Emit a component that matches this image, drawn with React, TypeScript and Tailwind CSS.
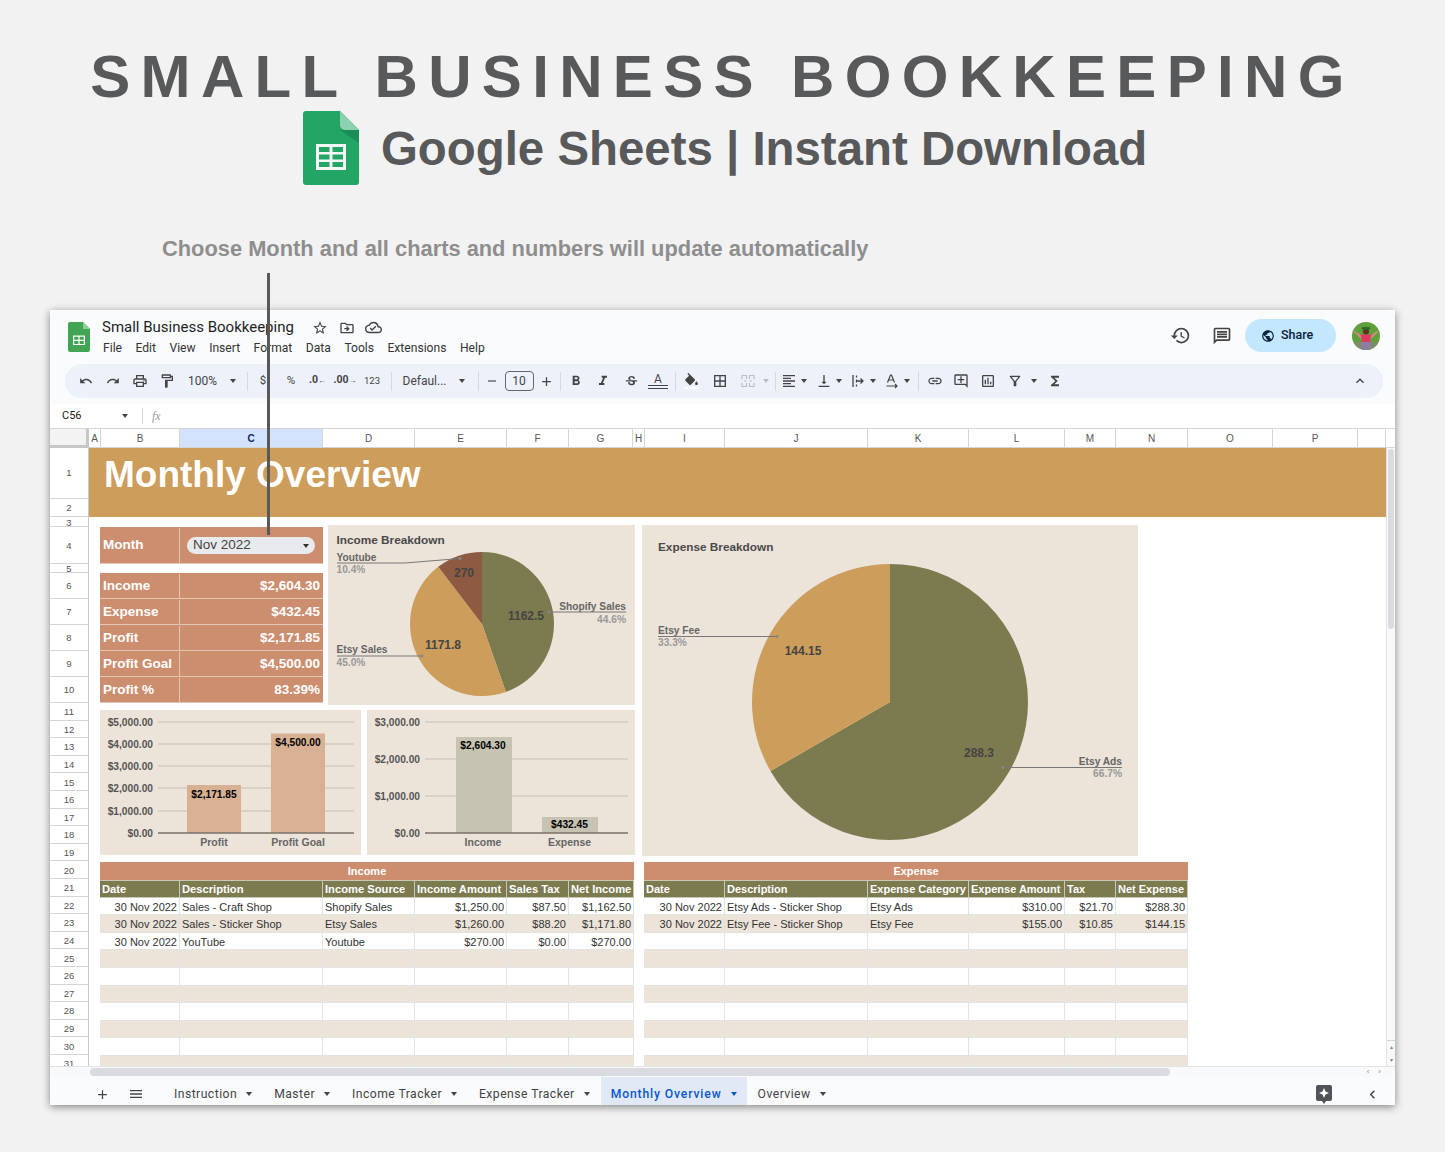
import React from "react";
import {
  MdUndo, MdRedo, MdOutlinePrint, MdOutlineFormatPaint, MdRemove, MdAdd, MdFormatBold, MdFormatItalic,
  MdStrikethroughS, MdOutlineBorderAll, MdFormatAlignLeft, MdVerticalAlignBottom,
  MdLink, MdOutlineAddComment, MdOutlineInsertChart, MdOutlineFilterAlt, MdFunctions, MdKeyboardArrowUp,
  MdStarBorder, MdOutlineDriveFileMove, MdOutlineCloudDone, MdHistory, MdOutlineComment, MdPublic, MdMenu, MdChevronLeft,
} from "react-icons/md";

const Caret = ({ className = "border-t-[#444]" }: { className?: string }) => (
  <span className={`inline-block w-0 h-0 border-l-[3.5px] border-r-[3.5px] border-t-[4px] border-l-transparent border-r-transparent ${className}`} />
);

const Slot = ({ w, children }: { w: number; children?: React.ReactNode }) => (
  <div className="flex items-center justify-center h-full shrink-0 text-[#444]" style={{ width: w }}>{children}</div>
);
const Sep = () => <div className="w-px h-[19px] bg-[#d5d9e0]" />;

const SmallLogo = () => (
  <svg width="22" height="30" viewBox="0 0 22 30">
    <path d="M2 0h13l7 7v21a2 2 0 0 1-2 2H2a2 2 0 0 1-2-2V2a2 2 0 0 1 2-2z" fill="#43a554" />
    <path d="M15 0l7 7h-7z" fill="#8ccf95" />
    <path d="M5 13.500h12v9.500H5z" fill="#fff" />
    <path d="M6.200 14.700h4.200v3h-4.200zM11.600 14.700h4.200v3h-4.200zM6.200 18.900h4.200v3h-4.200zM11.600 18.900h4.200v3h-4.200z" fill="#43a554" />
  </svg>
);

const BigLogo = () => (
  <svg width="56" height="74" viewBox="0 0 56 74">
    <path d="M3 0h34l19 19v52a3 3 0 0 1-3 3H3a3 3 0 0 1-3-3V3a3 3 0 0 1 3-3z" fill="#23a566" />
    <path d="M37 19l19 13V19z" fill="#1b8d57" />
    <path d="M37 0l19 19H42a5 5 0 0 1-5-5z" fill="#8ed1b1" />
    <path d="M13 33h30v26H13z" fill="#f4f7f5" />
    <path d="M16 36h10.500v5H16zM29.500 36H40v5H29.500zM16 43.500h10.500v5H16zM29.500 43.500H40v5H29.500zM16 51h10.500v5H16zM29.500 51H40v5H29.500z" fill="#23a566" />
  </svg>
);

const Avatar = () => (
  <svg width="28" height="28" viewBox="0 0 28 28">
    <clipPath id="av"><circle cx="14" cy="14" r="14" /></clipPath>
    <g clipPath="url(#av)">
      <rect width="28" height="28" fill="#5fa03c" />
      <rect y="20" width="28" height="8" fill="#7f8a6a" />
      <path d="M1.500 9.500l.8-1L9 13h10l6.700-4.500.8 1L20 16h-1v2H9v-2H8z" fill="#c98f76" />
      <path d="M8.500 12.500h11l-1 4v4h-9v-4z" fill="#dd3a62" />
      <rect x="9" y="20" width="10" height="8" fill="#8b7fa0" />
      <circle cx="14" cy="9.500" r="3" fill="#5b3423" />
      <ellipse cx="14" cy="6.300" rx="4.500" ry="1.500" fill="#2f6a2a" />
    </g>
  </svg>
);

const FillIcon = () => (
  <svg width="17" height="17" viewBox="0 0 24 24">
    <path fill="#444" d="M16.560 8.940L7.620 0 6.210 1.410l2.380 2.380-5.150 5.150c-.59.59-.59 1.540 0 2.120l5.500 5.500c.29.29.68.44 1.060.44s.77-.15 1.060-.44l5.500-5.500c.59-.58.59-1.530 0-2.120zM19 11.500s-2 2.170-2 3.500c0 1.100.9 2 2 2s2-.9 2-2c0-1.330-2-3.500-2-3.500z" />
    <path fill="#fff" d="M1 20h22v3H1z" />
  </svg>
);
const WrapIcon = () => (
  <svg width="14" height="14" viewBox="0 0 14 14" fill="none" stroke="#444" strokeWidth="1.300">
    <path d="M2 1v12M5.500 1.500v2M5.500 5.500v3M5.500 10.500v2M6 7h6M9.500 4.500L12 7 9.500 9.500" />
  </svg>
);
const RotateIcon = () => (
  <svg width="16" height="16" viewBox="0 0 16 16" fill="none" stroke="#444" strokeWidth="1.200">
    <path d="M3.500 9.500L6.500 2h1l3 7.500M4.500 7h5M2.500 13h10M11 11l2 2-2 2" />
  </svg>
);
const MergeIcon = () => (
  <svg width="14" height="14" viewBox="0 0 14 14" fill="none" stroke="#bdbfc3" strokeWidth="1.200">
    <path d="M1 5V1.500h4.500V5M8.500 5V1.500H13V5M1 9v3.500h4.500V9M8.500 9v3.500H13V9M3 7h2.500M8.500 7H11" />
  </svg>
);
const ExploreIcon = () => (
  <svg width="16" height="19" viewBox="0 0 16 19">
    <path d="M2 0h12a2 2 0 0 1 2 2v12a2 2 0 0 1-2 2h-4l-2 3-2-3H2a2 2 0 0 1-2-2V2a2 2 0 0 1 2-2z" fill="#505458" />
    <path d="M8 3l1.500 3.500L13 8l-3.500 1.500L8 13l-1.500-3.500L3 8l3.500-1.500z" fill="#fff" />
  </svg>
);

const menus = ["File", "Edit", "View", "Insert", "Format", "Data", "Tools", "Extensions", "Help"];

const TopBar = () => (
  <div className="bg-[#f9fbfd] h-[94px] shrink-0 flex flex-col font-['Roboto',sans-serif]">
    <div className="flex h-[54px] shrink-0">
      <div className="ml-[18px] mt-[12px]"><SmallLogo /></div>
      <div className="ml-[12px] flex flex-col mt-[7px]">
        <div className="flex items-center h-[19px]">
          <span className="text-[15px] pt-px text-[#1f1f1f] w-[210px] whitespace-nowrap">Small Business Bookkeeping</span>
          <MdStarBorder size={16} className="text-[#444] mt-[2px]" />
          <MdOutlineDriveFileMove size={16} className="text-[#444] ml-[11px] mt-[2px]" />
          <MdOutlineCloudDone size={17} className="text-[#444] ml-[10px] mt-[2px]" />
        </div>
        <div className="flex gap-[13.500px] mt-[3px] ml-px text-[12.100px] text-[#333] leading-[18px]">
          {menus.map((m) => <span key={m}>{m}</span>)}
        </div>
      </div>
      <div className="ml-auto flex items-center mr-[15px] mt-[-3px]">
        <MdHistory size={21} className="text-[#444]" />
        <MdOutlineComment size={20} className="text-[#444] ml-[21px] -scale-x-100" />
        <div className="ml-[13px] w-[91px] h-[33px] rounded-full bg-[#c2e7ff] flex items-center pl-[16px] text-[#0b2239]">
          <MdPublic size={14} />
          <span className="ml-[6px] text-[12.500px] font-medium">Share</span>
        </div>
        <div className="ml-[16px] h-[28px]"><Avatar /></div>
      </div>
    </div>
    <div className="ml-[15px] mr-[12px] h-[34px] rounded-full bg-[#edf2fa] flex items-center pl-[7px] pr-[15px] text-[#444]">
      <Slot w={27}><MdUndo size={14} /></Slot>
      <Slot w={27}><MdRedo size={14} /></Slot>
      <Slot w={27}><MdOutlinePrint size={16} /></Slot>
      <Slot w={27}><MdOutlineFormatPaint size={16} /></Slot>
      <Slot w={45}><span className="text-[12px]">100%</span></Slot>
      <Slot w={16}><Caret /></Slot>
      <Slot w={12}><Sep /></Slot>
      <Slot w={20}><span className="text-[11.500px]">$</span></Slot>
      <Slot w={5} />
      <Slot w={26}><span className="text-[11.500px]">%</span></Slot>
      <Slot w={27}><span className="text-[10.500px] font-bold relative -top-px">.0<span className="text-[8px]">←</span></span></Slot>
      <Slot w={28}><span className="text-[10.500px] font-bold relative -top-px">.00<span className="text-[8px]">→</span></span></Slot>
      <Slot w={26}><span className="text-[9.500px]">123</span></Slot>
      <Slot w={12}><Sep /></Slot>
      <Slot w={55}><span className="text-[12px]">Defaul...</span></Slot>
      <Slot w={20}><Caret /></Slot>
      <Slot w={12}><Sep /></Slot>
      <Slot w={16}><MdRemove size={14} /></Slot>
      <Slot w={38}><div className="w-[29px] h-[20px] border border-[#666] rounded-[4px] flex items-center justify-center text-[12px]">10</div></Slot>
      <Slot w={16}><MdAdd size={15} /></Slot>
      <Slot w={12}><Sep /></Slot>
      <Slot w={20}><MdFormatBold size={16} /></Slot>
      <Slot w={34}><MdFormatItalic size={16} /></Slot>
      <Slot w={22}><MdStrikethroughS size={15} /></Slot>
      <Slot w={32}>
        <div className="flex flex-col items-center">
          <span className="text-[12px] leading-[12px]">A</span>
          <div className="w-[20px] h-[4px] border-y border-[#444]" />
        </div>
      </Slot>
      <Slot w={2}><Sep /></Slot>
      <Slot w={30}><FillIcon /></Slot>
      <Slot w={28}><MdOutlineBorderAll size={16} /></Slot>
      <Slot w={28}><MergeIcon /></Slot>
      <Slot w={8}><Caret className="border-t-[#bdbfc3]" /></Slot>
      <Slot w={10}><Sep /></Slot>
      <Slot w={18}><MdFormatAlignLeft size={16} /></Slot>
      <Slot w={12}><Caret /></Slot>
      <Slot w={4} />
      <Slot w={20}><MdVerticalAlignBottom size={16} /></Slot>
      <Slot w={10}><Caret /></Slot>
      <Slot w={4} />
      <Slot w={20}><WrapIcon /></Slot>
      <Slot w={10}><Caret /></Slot>
      <Slot w={4} />
      <Slot w={20}><RotateIcon /></Slot>
      <Slot w={10}><Caret /></Slot>
      <Slot w={12}><Sep /></Slot>
      <Slot w={22}><MdLink size={16} /></Slot>
      <Slot w={30}><MdOutlineAddComment size={16} /></Slot>
      <Slot w={24}><MdOutlineInsertChart size={16} /></Slot>
      <Slot w={30}><MdOutlineFilterAlt size={16} /></Slot>
      <Slot w={8}><Caret /></Slot>
      <Slot w={34}><MdFunctions size={16} /></Slot>
      <div className="ml-auto"><MdKeyboardArrowUp size={16} /></div>
    </div>
  </div>
);

const FormulaBar = () => (
  <div className="h-[25px] shrink-0 bg-white flex items-center font-['Roboto',sans-serif] text-[#444] border-b border-[#d5d5d5]">
    <span className="w-[72px] pl-[12px] text-[11px] text-[#222]">C56</span>
    <Caret />
    <div className="ml-[14px] w-px h-[14px] bg-[#d5d5d5]" />
    <span className="ml-[9px] text-[12px] italic text-[#999] font-['Liberation_Serif',serif]">fx</span>
  </div>
);

const columns: [string, number][] = [
  ["A", 12], ["B", 79], ["C", 143], ["D", 92], ["E", 92], ["F", 62], ["G", 64], ["H", 12], ["I", 80], ["J", 143],
  ["K", 101], ["L", 96], ["M", 51], ["N", 72], ["O", 85], ["P", 85], ["", 28],
];

const ColumnHeader = () => (
  <div className="h-[19px] shrink-0 flex bg-white border-b border-[#d5d5d5] text-[10px] text-[#555] font-['Liberation_Sans',sans-serif]">
    <div className="w-[39px] shrink-0 bg-[#f3f3f3] border-r-[3px] border-b-[3px] border-[#c7c7c7] h-[19px]" />
    {columns.map(([c, w]) => (
      <div
        key={c || "end"}
        style={{ width: w }}
        className={c === "C"
          ? "shrink-0 flex items-center justify-center border-r border-[#d5d5d5] bg-[#d3e3fd] text-[#0b2a5e] font-bold"
          : "shrink-0 flex items-center justify-center border-r border-[#d5d5d5]"}
      >
        {c}
      </div>
    ))}
  </div>
);

const rowHeights: number[] = [51, 18, 10, 37, 9, 26, 26, 26, 26, 26, ...Array(21).fill(17.6)];

const rowPad = (i: number) => {
  if (i < 2) return "flex items-center justify-center border-b border-[#d5d5d5]";
  if (i === 2) return "flex items-center justify-center border-b border-[#d5d5d5] pt-[3px]";
  if (i >= 5 && i <= 9) return "flex items-center justify-center border-b border-[#d5d5d5] pt-px";
  return "flex items-center justify-center border-b border-[#d5d5d5] pt-[2px]";
};

const RowHeader = () => (
  <div className="w-[39px] shrink-0 bg-white border-r border-[#c7c7c7] text-[9.500px] leading-[10px] text-[#555]">
    {rowHeights.map((h, i) => (
      <div key={i} style={{ height: h }} className={rowPad(i)}>
        {i + 1}
      </div>
    ))}
  </div>
);

const SumRow = ({ label, value, h = "h-[26px]" }: { label: string; value?: React.ReactNode; h?: string }) => (
  <div className={`${h} flex bg-[#cc8e6f] border-b border-[#e4c6b5] text-white font-bold text-[13.500px] pt-px`}>
    <div className="w-[80px] shrink-0 pl-[3px] flex items-center border-r border-[#e4c6b5]">{label}</div>
    <div className="flex-1 pr-[3px] flex items-center justify-end">{value}</div>
  </div>
);

const Summary = () => (
  <div className="w-[223px] shrink-0 pt-[2px]">
    <SumRow
      label="Month"
      h="h-[37px]"
      value={
        <div className="w-[128px] h-[17px] mr-[5px] rounded-full bg-[#e8eaed] flex items-center justify-between pl-[6px] pr-[6px] text-[#444] font-normal text-[13.500px]">
          <span>Nov 2022</span>
          <Caret className="border-t-[#333]" />
        </div>
      }
    />
    <div className="h-[9px]" />
    <SumRow label="Income" value="$2,604.30" />
    <SumRow label="Expense" value="$432.45" />
    <SumRow label="Profit" value="$2,171.85" />
    <SumRow label="Profit Goal" value="$4,500.00" />
    <SumRow label="Profit %" value="83.39%" />
  </div>
);

const slice = (cx: number, cy: number, r: number, from: number, to: number) => {
  const p = (a: number) => {
    const t = (a * Math.PI) / 180;
    return `${(cx + r * Math.sin(t)).toFixed(2)} ${(cy - r * Math.cos(t)).toFixed(2)}`;
  };
  return `M${cx} ${cy}L${p(from)}A${r} ${r} 0 ${to - from > 180 ? 1 : 0} 1 ${p(to)}Z`;
};

const Label = ({ x, y, anchor = "start", children, fill = "#666", size = 10.5 }: { x: number; y: number; anchor?: "start" | "middle" | "end"; children: React.ReactNode; fill?: string; size?: number }) => (
  <text x={x} y={y} textAnchor={anchor} fill={fill} fontSize={size} fontWeight="700">{children}</text>
);

const IncomePie = () => (
  <div className="w-[307px] h-[180px] ml-[5px] bg-[#ece3d9] shrink-0">
    <svg width="307" height="180" viewBox="328 525 307 180" className="block">
      <path d={slice(482, 624, 72, 0, 160.6)} fill="#7c7a4f" />
      <path d={slice(482, 624, 72, 160.6, 322.6)} fill="#cd9d5b" />
      <path d={slice(482, 624, 72, 322.6, 360)} fill="#8d5a42" />
      <Label x={336.5} y={543.5} fill="#4a4a4a" size={11.8}>Income Breakdown</Label>
      <path d="M337 563H405L460 558.500" stroke="#777" fill="none" />
      <circle cx="460" cy="558.500" r="1.500" fill="#888" />
      <Label x={336.5} y={560.500} size={10.2}>Youtube</Label>
      <Label x={336.5} y={573} fill="#999" size={10.2}>10.4%</Label>
      <path d="M549 612H626" stroke="#777" />
      <circle cx="549" cy="612" r="1.500" fill="#888" />
      <Label x={626} y={610} anchor="end" size={10.2}>Shopify Sales</Label>
      <Label x={626} y={623} anchor="end" fill="#999" size={10.2}>44.6%</Label>
      <path d="M337 656H422" stroke="#777" />
      <circle cx="422" cy="656" r="1.500" fill="#888" />
      <Label x={336.5} y={653} size={10.2}>Etsy Sales</Label>
      <Label x={336.5} y={666} fill="#999" size={10.2}>45.0%</Label>
      <Label x={464} y={577} anchor="middle" fill="#444" size={12}>270</Label>
      <Label x={526} y={620} anchor="middle" fill="#444" size={12}>1162.5</Label>
      <Label x={443} y={649} anchor="middle" fill="#444" size={12}>1171.8</Label>
    </svg>
  </div>
);

const ExpensePie = () => (
  <div className="w-[496px] h-[331px] ml-[7px] bg-[#ece3d9] shrink-0">
    <svg width="496" height="331" viewBox="642 525 496 331" className="block">
      <path d={slice(890, 702, 138, 0, 240)} fill="#7c7a4f" />
      <path d={slice(890, 702, 138, 240, 360)} fill="#cd9d5b" />
      <Label x={658} y={551} fill="#4a4a4a" size={11.8}>Expense Breakdown</Label>
      <path d="M658 636.500H777" stroke="#777" />
      <circle cx="777" cy="636.500" r="1.500" fill="#888" />
      <Label x={658} y={634} size={10.2}>Etsy Fee</Label>
      <Label x={658} y={646} fill="#999" size={10.2}>33.3%</Label>
      <path d="M1003 767.500H1122" stroke="#777" />
      <circle cx="1003" cy="767.500" r="1.500" fill="#888" />
      <Label x={1122} y={765} anchor="end" size={10.2}>Etsy Ads</Label>
      <Label x={1122} y={777} anchor="end" fill="#999" size={10.2}>66.7%</Label>
      <Label x={803} y={655} anchor="middle" fill="#444" size={12}>144.15</Label>
      <Label x={979} y={757} anchor="middle" fill="#444" size={12}>288.3</Label>
    </svg>
  </div>
);

const ProfitChart = () => (
  <div className="w-[261px] h-[145px] bg-[#ece3d9] shrink-0">
    <svg width="261" height="145" viewBox="100 710 261 145" className="block">
      {[["$5,000.00", 722], ["$4,000.00", 744], ["$3,000.00", 766], ["$2,000.00", 788], ["$1,000.00", 811]].map(([t, y]) => (
        <g key={t as string}>
          <path d={`M158 ${y}H354`} stroke="#c6bfb4" />
          <Label x={153} y={(y as number) + 3.5} anchor="end" fill="#555" size={10.2}>{t}</Label>
        </g>
      ))}
      <Label x={153} y={836.500} anchor="end" fill="#555" size={10.2}>$0.00</Label>
      <rect x="187" y="785" width="54" height="48" fill="#d8b093" />
      <rect x="271" y="733.500" width="54" height="99.500" fill="#d8b093" />
      <path d="M158 833H354" stroke="#7a7068" strokeWidth="1.500" />
      <Label x={214} y={797.500} anchor="middle" fill="#000" size={10.2}>$2,171.85</Label>
      <Label x={298} y={746} anchor="middle" fill="#000" size={10.2}>$4,500.00</Label>
      <Label x={214} y={846} anchor="middle">Profit</Label>
      <Label x={298} y={846} anchor="middle">Profit Goal</Label>
    </svg>
  </div>
);

const IncomeChart = () => (
  <div className="w-[268px] h-[145px] ml-[6px] bg-[#ece3d9] shrink-0">
    <svg width="268" height="145" viewBox="367 710 268 145" className="block">
      {[["$3,000.00", 722], ["$2,000.00", 759], ["$1,000.00", 796]].map(([t, y]) => (
        <g key={t as string}>
          <path d={`M425 ${y}H628`} stroke="#c6bfb4" />
          <Label x={420} y={(y as number) + 3.5} anchor="end" fill="#555" size={10.2}>{t}</Label>
        </g>
      ))}
      <Label x={420} y={836.500} anchor="end" fill="#555" size={10.2}>$0.00</Label>
      <rect x="456" y="737" width="56" height="96" fill="#c6c3b2" />
      <rect x="542" y="817" width="56" height="16" fill="#c6c3b2" />
      <path d="M425 833H628" stroke="#7a7068" strokeWidth="1.500" />
      <Label x={483} y={749} anchor="middle" fill="#000" size={10.2}>$2,604.30</Label>
      <Label x={569.500} y={828} anchor="middle" fill="#000" size={10.2}>$432.45</Label>
      <Label x={483} y={846} anchor="middle">Income</Label>
      <Label x={569.500} y={846} anchor="middle">Expense</Label>
    </svg>
  </div>
);

const rightCols = new Set([0, 3, 4, 5]);

const DataTable = ({ title, width, cols, head, data, headSize }: { title: string; width: string; cols: string; head: string[]; data: string[][]; headSize: string }) => (
  <div className={`${width} shrink-0`}>
    <div className="h-[18px] bg-[#cc8e6f] text-white font-bold text-[11px] flex items-center justify-center">{title}</div>
    <div className={`grid ${cols} ${headSize} h-[17.600px] bg-[#7c7a4f] border-y border-[#c9c8b4] text-white font-bold leading-[15px] whitespace-nowrap`}>
      {head.map((h) => <div key={h} className="pl-[2px] pt-px border-r border-[#c9c8b4] overflow-hidden flex items-center">{h}</div>)}
    </div>
    {Array.from({ length: 10 }).map((_, r) => (
      <div key={r} className={r % 2 ? `grid ${cols} h-[17.600px] bg-[#ece3d9] text-[#333] text-[11px]` : `grid ${cols} h-[17.600px] bg-white text-[#333] text-[11px]`}>
        {head.map((_, c) => (
          <div
            key={c}
            className={rightCols.has(c)
              ? "border-r border-b border-[#e3e3e3] px-[2px] pt-[2px] flex items-center justify-end whitespace-nowrap overflow-hidden"
              : "border-r border-b border-[#e3e3e3] px-[2px] pt-[2px] flex items-center whitespace-nowrap overflow-hidden"}
          >
            {data[r]?.[c]}
          </div>
        ))}
      </div>
    ))}
  </div>
);

const Sheet = () => (
  <div className="flex h-[618px] shrink-0 overflow-hidden bg-white font-['Liberation_Sans',Arial,sans-serif]">
    <RowHeader />
    <div className="w-[1297px] shrink-0">
      <div className="h-[69px] bg-[#cd9d5b] pl-[15px] pt-[3px] text-white font-bold text-[37px] leading-[47px]">Monthly Overview</div>
      <div className="pl-[11px] pt-[8px]">
        <div className="flex">
          <div className="w-[535px] shrink-0">
            <div className="flex"><Summary /><IncomePie /></div>
            <div className="flex mt-[5px]"><ProfitChart /><IncomeChart /></div>
          </div>
          <ExpensePie />
        </div>
        <div className="flex mt-[6px]">
          <DataTable
            title="Income"
            width="w-[534px]"
            headSize="text-[11.200px]"
            cols="grid-cols-[80px_143px_92px_92px_62px_65px]"
            head={["Date", "Description", "Income Source", "Income Amount", "Sales Tax", "Net Income"]}
            data={[
              ["30 Nov 2022", "Sales - Craft Shop", "Shopify Sales", "$1,250.00", "$87.50", "$1,162.50"],
              ["30 Nov 2022", "Sales - Sticker Shop", "Etsy Sales", "$1,260.00", "$88.20", "$1,171.80"],
              ["30 Nov 2022", "YouTube", "Youtube", "$270.00", "$0.00", "$270.00"],
            ]}
          />
          <div className="w-[10px] shrink-0" />
          <DataTable
            title="Expense"
            width="w-[544px]"
            headSize="text-[11px]"
            cols="grid-cols-[81px_143px_101px_96px_51px_72px]"
            head={["Date", "Description", "Expense Category", "Expense Amount", "Tax", "Net Expense"]}
            data={[
              ["30 Nov 2022", "Etsy Ads - Sticker Shop", "Etsy Ads", "$310.00", "$21.70", "$288.30"],
              ["30 Nov 2022", "Etsy Fee - Sticker Shop", "Etsy Fee", "$155.00", "$10.85", "$144.15"],
            ]}
          />
        </div>
      </div>
    </div>
    <div className="w-[9px] shrink-0 bg-[#f8f9fa] border-l border-[#e3e3e3] flex flex-col items-center justify-between">
      <div className="w-[6px] h-[180px] rounded-full bg-[#dadce0] mt-px" />
      <div className="w-full h-[26px] border-t border-[#d5d5d5] flex flex-col items-center justify-around text-[6px] leading-[6px] text-[#888]">
        <span>▴</span>
        <span>▾</span>
      </div>
    </div>
  </div>
);

const HScroll = () => (
  <div className="h-[11px] shrink-0 bg-[#f8f9fa] border-t border-[#e3e3e3] flex items-center pl-[40px] pr-[14px]">
    <div className="w-[1080px] h-[8px] rounded-full bg-[#d9dbe0]" />
    <div className="ml-auto flex items-center gap-[9px] text-[8px] leading-[8px] text-[#888]">
      <span>‹</span>
      <span>›</span>
    </div>
  </div>
);

const tabs: [string, boolean][] = [
  ["Instruction", false], ["Master", false], ["Income Tracker", false], ["Expense Tracker", false], ["Monthly Overview", true], ["Overview", false],
];

const TabBar = () => (
  <div className="h-[28px] shrink-0 bg-[#f9fbfd] flex items-stretch font-['Roboto',sans-serif] text-[12.200px] tracking-[0.45px] text-[#444]">
    <div className="w-[72px] flex items-center justify-end pr-[12px] pt-[6px]"><MdAdd size={15} /></div>
    <div className="w-[26px] pl-[6px] flex items-center pt-[6px]"><MdMenu size={16} /></div>
    <div className="w-[15px]" />
    {tabs.map(([t, active]) =>
      active ? (
        <div key={t} className="flex items-center bg-[#e1e9f7] pl-[10px] pr-[10px] h-full pt-[6px] text-[#0b57d0] font-medium tracking-[0.85px]">
          <span>{t}</span>
          <span className="ml-[9px] flex"><Caret className="border-t-[#0b57d0]" /></span>
        </div>
      ) : (
        <div key={t} className="flex items-center pl-[11px] pr-[11px] h-full pt-[6px]">
          <span>{t}</span>
          <span className="ml-[9px] flex"><Caret /></span>
        </div>
      )
    )}
    <div className="ml-auto flex items-center pr-[14px] pt-[6px]">
      <ExploreIcon />
      <MdChevronLeft size={17} className="ml-[32px]" />
    </div>
  </div>
);

export default function App() {
  return (
    <div className="relative w-[1445px] h-[1152px] overflow-hidden bg-[#f2f2f2] font-['Liberation_Sans',Arial,sans-serif] flex flex-col">
      <div className="h-[111px] shrink-0 pt-[42px] text-center text-[60px] leading-[70px] font-bold text-[#58595b] tracking-[10.340px] whitespace-nowrap">
        SMALL BUSINESS BOOKKEEPING
      </div>
      <div className="h-[74px] shrink-0 flex items-center pl-[303px]">
        <BigLogo />
        <span className="ml-[22px] pt-[2px] text-[47.400px] font-bold text-[#58595b] whitespace-nowrap">Google Sheets | Instant Download</span>
      </div>
      <div className="h-[125px] shrink-0 pl-[162px] pt-[50px] text-[21.850px] leading-[28px] font-bold text-[#8e8e8e] whitespace-nowrap">
        Choose Month and all charts and numbers will update automatically
      </div>
      <div className="ml-[50px] w-[1345px] h-[795px] flex flex-col overflow-hidden shadow-[0_2px_8px_rgba(0,0,0,0.45)]">
        <TopBar />
        <FormulaBar />
        <ColumnHeader />
        <Sheet />
        <HScroll />
        <TabBar />
      </div>
      <div className="absolute left-[267px] top-[273px] w-[3px] h-[262px] bg-[#595959]" />
    </div>
  );
}
